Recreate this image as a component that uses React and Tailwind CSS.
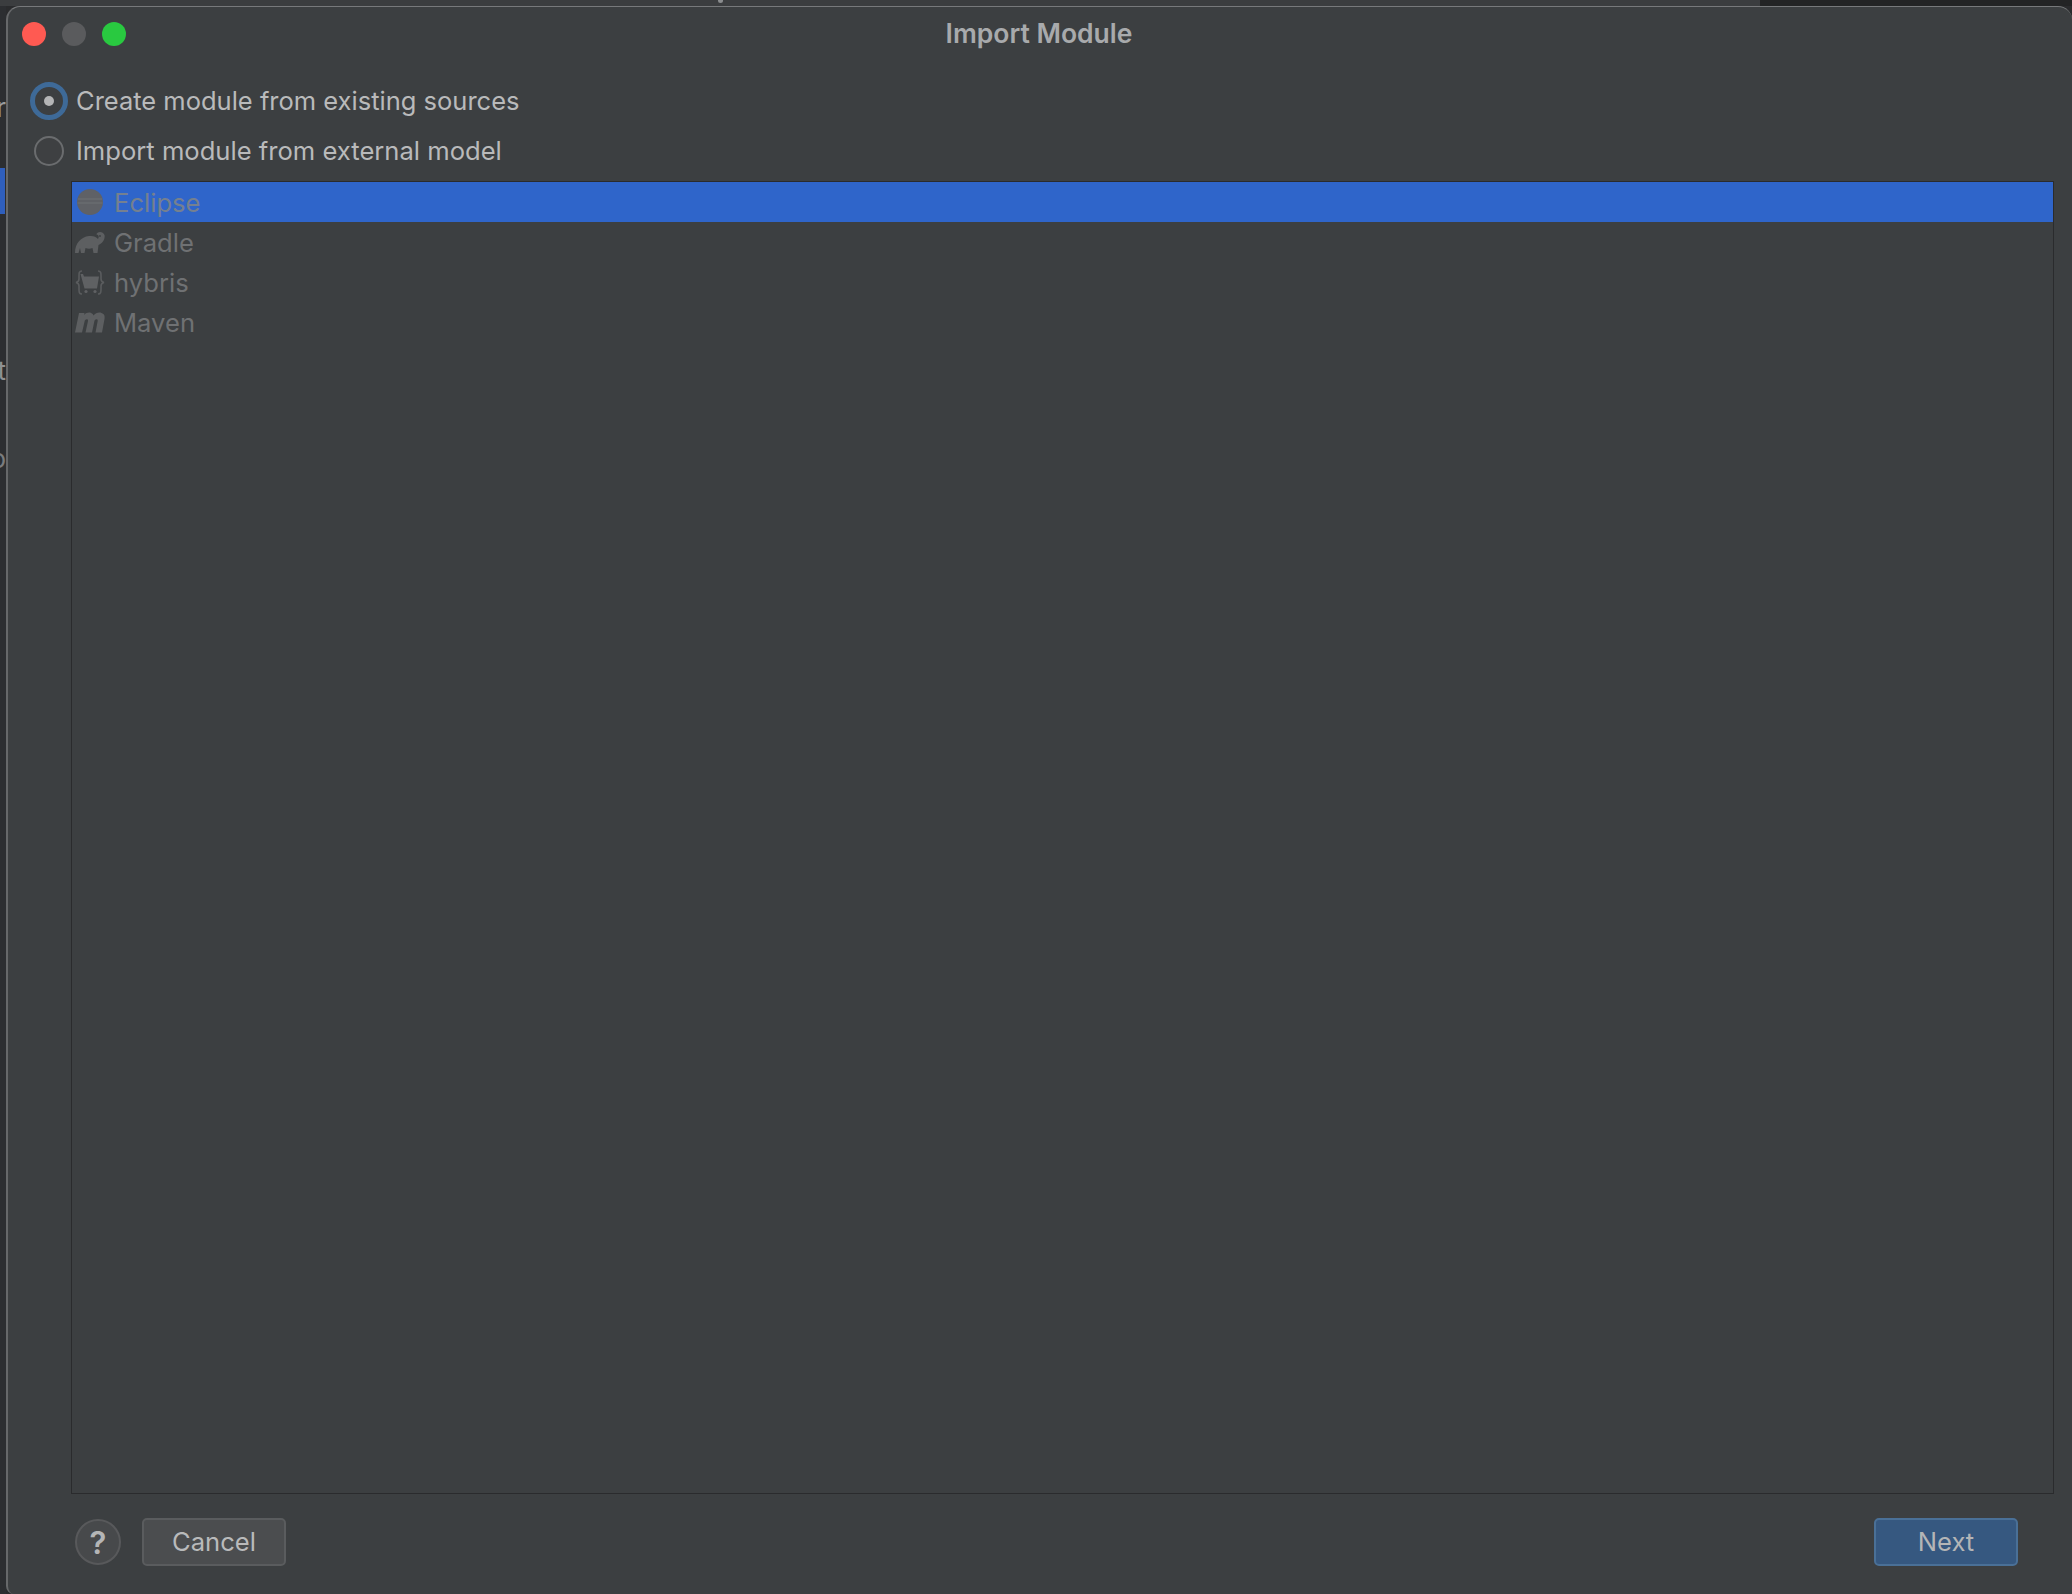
const font = { fontFamily: "Inter, 'Liberation Sans', sans-serif" };

function Row({ icon, label, selected }) {
  return (
    <div className={`flex h-[40px] items-center pl-[3px] ${selected ? "bg-[#2f65ca]" : ""}`}>
      <span className="flex h-[30px] w-[30px] items-center justify-center">{icon}</span>
      <span className={`ml-[9px] pt-px text-[25.6px] leading-none ${selected ? "text-[#75808f]" : "text-[#6f7173]"}`}>{label}</span>
    </div>
  );
}

const EclipseIcon = (
  <svg width="28" height="28" viewBox="0 0 28 28">
    <circle cx="14" cy="14" r="13" fill="#5f6166" />
    <path d="M2 11h24M1.500 15h25" stroke="#6a6c70" strokeWidth="1.500" />
  </svg>
);
const GradleIcon = (
  <svg width="30" height="23" viewBox="0 0 30 23">
    <path d="M0 22C0 12 6 6 14 5c4-.5 7 .5 9 3 1.500-2.500.5-4-1.500-4.500C21.500.5 28-.5 29.500 4c1 5-3 9-6 10l-1 8h-4l-1-5c-2 1-5 1-7 0l-1 5H6l-1-5-1.500 5z" fill="#5d5f61" />
    <circle cx="25" cy="5" r="0.900" fill="#3c3f41" />
  </svg>
);
const HybrisIcon = (
  <svg width="30" height="25" viewBox="0 0 30 25" fill="none">
    <path d="M7 1C4 1 4 3 4 6v3c0 2-1 3-3 3.500 2 .5 3 1.500 3 3.500v3c0 3 0 5 3 5M23 1c3 0 3 2 3 5v3c0 2 1 3 3 3.500-2 .5-3 1.500-3 3.500v3c0 3 0 5-3 5" stroke="#5a5c5e" strokeWidth="1.600" />
    <path d="M5.500 4h2.500l1 2.500h15l-2 12H9.500z" fill="#5f6163" />
    <circle cx="11" cy="21.500" r="1.600" fill="#5f6163" />
    <circle cx="20" cy="21.500" r="1.600" fill="#5f6163" />
  </svg>
);
const MavenIcon = (
  <svg width="30" height="21" viewBox="0 0 30 21">
    <path d="M0 20.500L4 .9h5.500l-.4 2C11 .9 14 0 16 .9c1.500.5 2.200 1.500 2.500 2.500C20.500 1.200 23.500 0 26.500.9c3 1 3.500 3 3 6L27 20.500h-6.500l2.200-11.500c.3-2-1.700-2.500-3.200-.5L17 20.500h-6.500L13 9c.3-2-1.700-2.500-3.200-.5L7 20.500z" fill="#5d5f61" />
  </svg>
);

export default function App() {
  return (
    <div className="flex h-[1594px] w-[2072px] flex-col overflow-hidden bg-[#2a2b2d]" style={font}>
      <div className="flex h-[6px] shrink-0">
        <div className="relative w-[1760px] bg-[#3b3d3f]">
          <span className="absolute left-[718px] top-0 h-[3px] w-[5px] rounded-b-full bg-[#8a8c8e]" />
        </div>
        <div className="flex-1 bg-[#232425]" />
      </div>
      <div className="flex min-h-0 flex-1">
        <div className="relative w-[6px] shrink-0 overflow-hidden bg-[#2c2e31]">
          <span className="absolute right-0 top-[89px] text-[26px] leading-[26px] text-[#9a9c9e]">r</span>
          <span className="absolute left-0 top-[162px] h-[46px] w-[5px] bg-[#2f5fbd]" />
          <span className="absolute right-0 top-[352px] text-[26px] leading-[26px] text-[#8f9193]">t</span>
          <span className="absolute right-0 top-[440px] text-[26px] leading-[26px] text-[#7a7c7e]">o</span>
        </div>
        <div className="flex min-w-0 flex-1 flex-col rounded-t-[14px] rounded-bl-[8px] border-l-2 border-t border-[#77797b] bg-[#3c3f41] [border-left-color:#66686a]">
          <div className="relative flex h-[54px] shrink-0 items-center pl-[14px]">
            <div className="flex gap-[16px]">
              <span className="h-[24px] w-[24px] rounded-full bg-[#ff5a52]" />
              <span className="h-[24px] w-[24px] rounded-full bg-[#5a5b5d]" />
              <span className="h-[24px] w-[24px] rounded-full bg-[#29c940]" />
            </div>
            <span className="absolute inset-0 flex items-center justify-center pb-[2px] pr-[2px] text-[26.5px] font-semibold leading-none text-[#a8aaac]">Import Module</span>
          </div>
          <div className="mt-[21px] flex h-[38px] shrink-0 items-center pl-[22px]">
            <span className="flex h-[38px] w-[38px] items-center justify-center rounded-full border-[5px] border-[#3e6a98] bg-[#3c3f41]">
              <span className="h-[10px] w-[10px] rounded-full bg-[#b4b5b6]" />
            </span>
            <span className="ml-[8px] text-[25.5px] leading-none text-[#b9babb]">Create module from existing sources</span>
          </div>
          <div className="mt-[12px] flex h-[38px] shrink-0 items-center pl-[26px]">
            <span className="h-[30px] w-[30px] rounded-full border-2 border-[#6a6c6e] bg-[#3e4042]" />
            <span className="ml-[12px] text-[25.6px] leading-none text-[#b9babb]">Import module from external model</span>
          </div>
          <div className="ml-[63px] mr-[18px] mt-[11px] min-h-0 flex-1 border border-[#2a2b2d]">
            <Row selected icon={EclipseIcon} label="Eclipse" />
            <Row icon={GradleIcon} label="Gradle" />
            <Row icon={HybrisIcon} label="hybris" />
            <Row icon={MavenIcon} label="Maven" />
          </div>
          <div className="flex h-[100px] shrink-0 items-start pl-[67px] pr-[54px] pt-[24px]">
            <span className="mt-px flex h-[46px] w-[46px] items-center justify-center rounded-full border-2 border-[#58595b] bg-[#47494b] text-[31px] font-semibold leading-none text-[#b4b5b6]">?</span>
            <button className="ml-[21px] h-[48px] w-[144px] rounded-[5px] border-2 border-[#5a5c5e] bg-[#4b4d4f] pt-px text-[25.6px] text-[#b9babb]">Cancel</button>
            <button className="ml-auto h-[48px] w-[144px] rounded-[5px] border-2 border-[#4a7097] bg-[#365880] pt-px text-[25.6px] text-[#b4b5b6]">Next</button>
          </div>
        </div>
      </div>
    </div>
  );
}
